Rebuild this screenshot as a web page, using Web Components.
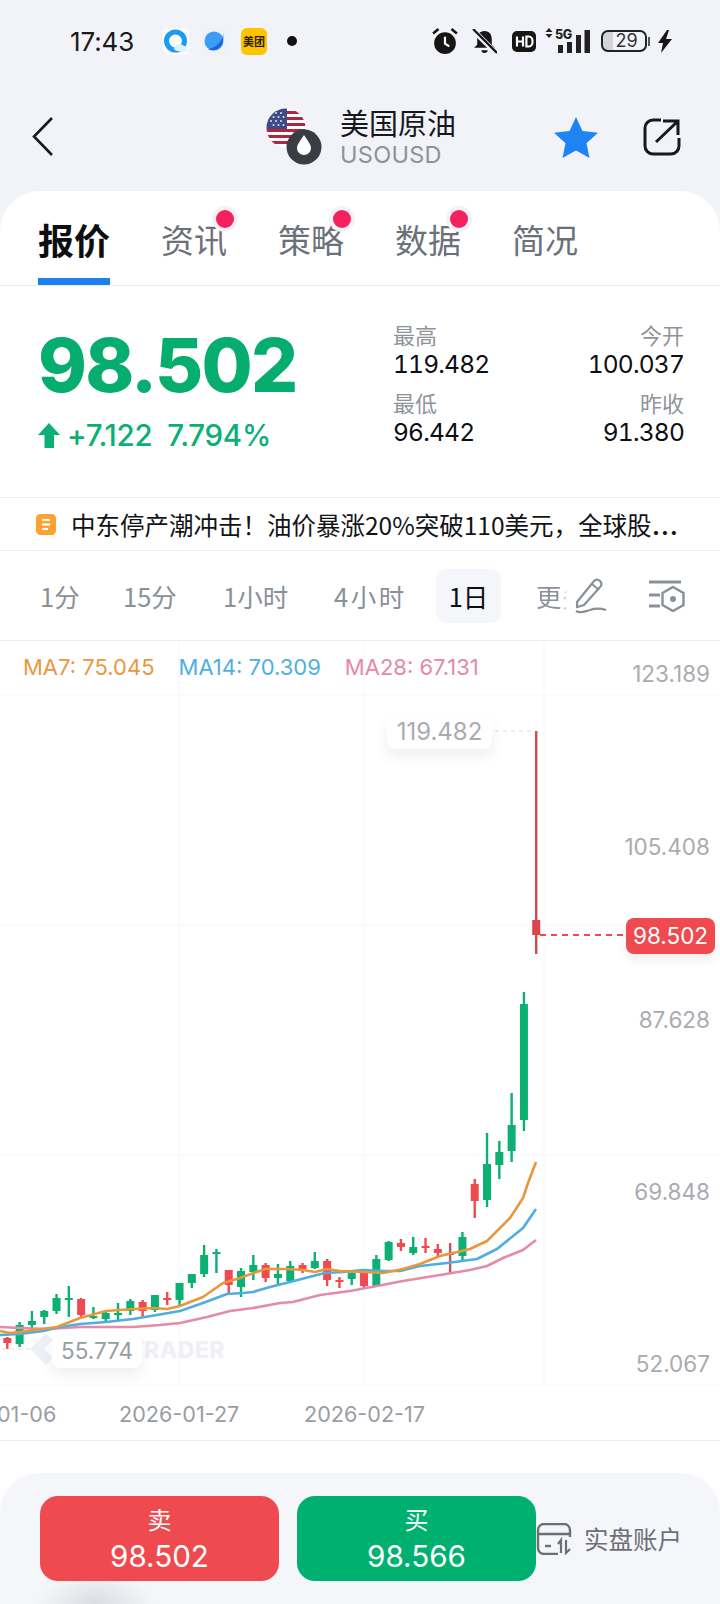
<!DOCTYPE html>
<html lang="zh">
<head>
<meta charset="utf-8">
<title>USOUSD</title>
<style>
    html, body { margin: 0; padding: 0; background: #f2f3f8; }
    body { width: 720px; height: 1604px; overflow: hidden; font-family: Inter, "Noto Sans CJK SC", sans-serif; }
    #page-card { display: block; background: #ffffff; border-radius: 40px 40px 0 0; }
</style>
</head>
<body>
<status-bar></status-bar>
<app-header></app-header>
<div id="page-card">
    <tab-bar></tab-bar>
    <quote-panel></quote-panel>
    <news-ticker></news-ticker>
    <period-bar></period-bar>
    <kline-chart></kline-chart>
    <trade-bar></trade-bar>
</div>
<script>
const FONT = `Inter, "Noto Sans CJK SC", sans-serif`;
const CJK = `"Noto Sans CJK SC", sans-serif`;

// every component is only a template, so one small base class is enough
function define(name, html, onReady) {
    const $template = document.createElement("template");
    $template.innerHTML = html;
    customElements.define(name, class extends HTMLElement {
        constructor() {
            super();
            this.attachShadow({ mode: "open" });
            this.shadowRoot.appendChild($template.content.cloneNode(true));
            if (onReady) onReady(this.shadowRoot);
        }
    });
}

define("status-bar", /*html*/ `
    <style>
        :host { display: flex; align-items: center; height: 82px; padding-left: 70px; box-sizing: border-box; font-family: ${FONT}; color: #1a1a1a; }
        .time { font-size: 26px; width: 93px; letter-spacing: -0.1px; }
        svg { display: block; flex: none; }
        .tile { width: 26px; height: 27px; margin-right: 13px; }
        .mt { width: 26px; height: 27px; border-radius: 6px; background: #ffc300; display: flex; align-items: center; justify-content: center; font: 700 11px ${CJK}; color: #2a2000; margin-right: 20px; flex: none; }
        .dot { width: 10px; height: 10px; border-radius: 50%; background: #111; flex: none; }
        .right { margin-left: auto; margin-right: 48px; display: flex; align-items: center; }
        .batt { position: relative; width: 46px; height: 22px; box-sizing: border-box; border: 2px solid #222; border-radius: 7px; font-size: 18px; line-height: 18px; text-align: center; color: #333; margin-left: 10px; background: linear-gradient(90deg, #d4d5d8 0 24%, transparent 24%); padding-left: 5px; }
        .tip { width: 2px; height: 9px; background: #555; margin: 0 8px 0 1px; }
    </style>
    <span class="time">17:43</span>
    <svg class="tile" viewBox="0 0 26 27"><rect width="26" height="27" rx="6" fill="#fbfcfe"/><circle cx="12.5" cy="13" r="9" fill="none" stroke="#1d9bf0" stroke-width="5"/><path d="M11 21c0-4 7-6 10-3 3 0 4 2 3 5-1 1-11 1-13-2z" fill="#e3f1fb"/></svg>
    <svg class="tile" viewBox="0 0 26 27"><rect width="26" height="27" rx="6" fill="#eef1f6"/><circle cx="12" cy="13" r="9.5" fill="#3d9df5"/><path d="M21 5c1 6-6 15-15 16 3 2 9 2 12-2 3-3 4-9 3-14z" fill="#1e62dc"/></svg>
    <span class="mt">美团</span>
    <span class="dot"></span>
    <div class="right">
        <svg width="26" height="26" viewBox="0 0 24 24" style="margin-right:14px"><circle cx="12" cy="14" r="10" fill="#161616"/><path d="M12 8v6.5l4 2.5" stroke="#fff" stroke-width="2" fill="none"/><path d="M1 5l5-4M23 5l-5-4" stroke="#161616" stroke-width="2.4"/></svg>
        <svg width="25" height="25" viewBox="0 0 24 24" style="margin-right:15px"><path d="M12 2c5 0 7 4 7 8v5l3 3H2l3-3v-5c0-4 2-8 7-8z" fill="#161616"/><path d="M9 20.5h6a3 2.5 0 0 1-6 0z" fill="#161616"/><path d="M1 1l22 22" stroke="#f2f3f8" stroke-width="5"/><path d="M1 0l23 23" stroke="#161616" stroke-width="2.2"/></svg>
        <svg width="24" height="21" viewBox="0 0 24 21" style="margin-right:9px"><rect width="24" height="21" rx="5" fill="#161616"/><path d="M5 5.5v10M11 5.5v10M5 10.5h6" stroke="#fff" stroke-width="2.2" fill="none"/><path d="M14.4 5.5v10h2.4c5 0 5-10 0-10z" stroke="#fff" stroke-width="2.2" fill="none"/></svg>
        <svg width="46" height="26" viewBox="0 0 46 26"><path d="M4 0l3.5 4h-7zM4 10l3.5-4h-7z" fill="#222"/><text x="10" y="10.5" font-family="Inter" font-size="12.5" font-weight="800" fill="#222" letter-spacing="-0.4">5G</text><path d="M13 17h5v8h-5zM22 14h5v11h-5zM31 7h5v18h-5zM39.500 2h5.500v23h-5.500z" fill="#222"/></svg>
        <div class="batt">29</div>
        <div class="tip"></div>
        <svg width="14" height="23" viewBox="0 0 14 23"><path d="M9 0L0 13h5l-2 10 11-14H8l3-9z" fill="#161616"/></svg>
    </div>
`);

define("app-header", /*html*/ `
    <style>
        :host { display: flex; align-items: center; height: 109px; position: relative; font-family: ${CJK}; padding: 0 38px 0 31px; box-sizing: border-box; }
        svg { display: block; flex: none; }
        .mid { display: flex; align-items: center; margin-left: 212px; }
        .name { margin-left: 18px; width: 115px; }
        .cn { font-size: 29px; line-height: 34px; color: #16181c; white-space: nowrap; }
        .code { font: 400 23.500px/28px ${FONT}; color: #8d939b; margin-top: 2px; letter-spacing: 0.3px; }
        .star { margin-left: 99px; }
        .share { margin-left: 45px; }
    </style>
    <svg width="23" height="41" viewBox="0 0 23 41"><path d="M21 2L3 20.500l18 18.500" fill="none" stroke="#17191d" stroke-width="2.6"/></svg>
    <div class="mid">
        <svg width="56" height="58" viewBox="0 0 56 58">
            <defs><clipPath id="c"><circle cx="20" cy="20" r="19.500"/></clipPath></defs>
            <g clip-path="url(#c)">
                <rect width="40" height="40" fill="#fff"/>
                <path d="M0 3h40v3H0zM0 9h40v3H0zM0 15h40v3H0zM0 21h40v3H0zM0 27h40v3H0zM0 33h40v3H0z" fill="#b0263c"/>
                <rect width="21" height="21" fill="#3c4c85"/>
                <g fill="#dfe3f2"><circle cx="5" cy="5" r="1"/><circle cx="10" cy="5" r="1"/><circle cx="15" cy="5" r="1"/><circle cx="7.500" cy="9" r="1"/><circle cx="12.500" cy="9" r="1"/><circle cx="17.500" cy="9" r="1"/><circle cx="5" cy="13" r="1"/><circle cx="10" cy="13" r="1"/><circle cx="15" cy="13" r="1"/><circle cx="7.500" cy="17" r="1"/><circle cx="12.500" cy="17" r="1"/><circle cx="17.500" cy="17" r="1"/></g>
            </g>
            <circle cx="38" cy="39" r="17.500" fill="#3a3d44"/>
            <path d="M38 27c3 5 7 9 7 13a7 7 0 0 1-14 0c0-4 4-8 7-13z" fill="#fff"/>
        </svg>
        <div class="name"><div class="cn">美国原油</div><div class="code">USOUSD</div></div>
    </div>
    <svg class="star" width="44" height="42" viewBox="0 0 44 42"><path d="M22 1l6.500 14 15.500 1.800-11.500 10.500 3 14.700L22 34.500 8.500 42l3-14.700L0 16.800 15.500 15z" fill="#1e84f5"/></svg>
    <svg class="share" width="38" height="38" viewBox="0 0 38 38"><path d="M18 2H10a8 8 0 0 0-8 8v18a8 8 0 0 0 8 8h18a8 8 0 0 0 8-8v-8" fill="none" stroke="#17191d" stroke-width="3"/><path d="M13 24L35 3M20 3h15v14" fill="none" stroke="#17191d" stroke-width="3"/></svg>
`);

define("tab-bar", /*html*/ `
    <style>
        :host { display: flex; gap: 51px; height: 95px; box-sizing: border-box; padding-left: 38px; border-bottom: 1px solid #ebedf2; font-family: ${CJK}; }
        .tab { position: relative; font-size: 33px; line-height: 96px; color: #6b7079; height: 94px; }
        .on { font-size: 36px; font-weight: 700; color: #0c0e12; }
        .on::after { content: ""; position: absolute; left: 0; right: 0; bottom: 0; height: 7px; background: #1e7ff0; }
        .dot { position: absolute; right: -7px; top: 19px; width: 18px; height: 18px; border-radius: 50%; background: #f5215f; box-shadow: 0 0 0 4px #f6f0f7; }
    </style>
    <div class="tab on">报价</div>
    <div class="tab">资讯<i class="dot"></i></div>
    <div class="tab">策略<i class="dot"></i></div>
    <div class="tab">数据<i class="dot"></i></div>
    <div class="tab">简况</div>
`);

define("quote-panel", /*html*/ `
    <style>
        :host { display: flex; justify-content: space-between; height: 212px; box-sizing: border-box; padding: 38px 36px 0 38px; border-bottom: 1px solid #ebedf2; font-family: ${FONT}; }
        .price { font-size: 74px; font-weight: 800; line-height: 80px; color: #05ad6e; margin-top: 1px; letter-spacing: -1.800px; }
        .change { display: flex; align-items: center; color: #0bb074; font-size: 29.500px; line-height: 32px; margin-top: 14px; letter-spacing: -0.3px; }
        .change svg { margin-right: 7px; }
        .change b { font-weight: 500; margin-right: 15px; }
        .stats { width: 291px; display: grid; grid-template-columns: 1fr 1fr; row-gap: 14px; align-content: start; }
        .s { font-size: 24.500px; color: #0c0e12; font-feature-settings: "tnum"; }
        .s span { display: block; font: 400 22px/26px ${CJK}; color: #8f949b; margin: -3px 0 3px; }
        .s b { display: block; font-weight: 400; line-height: 28px; letter-spacing: -0.8px; }
        .r { text-align: right; }
    </style>
    <div>
        <div class="price">98.502</div>
        <div class="change">
            <svg width="22" height="25" viewBox="0 0 22 25"><path d="M11 0l11 12h-6v13H6.500V12H0z" fill="#0bb074"/></svg>
            <b>+7.122</b><b>7.794%</b>
        </div>
    </div>
    <div class="stats">
        <div class="s"><span>最高</span><b>119.482</b></div>
        <div class="s r"><span>今开</span><b>100.037</b></div>
        <div class="s"><span>最低</span><b>96.442</b></div>
        <div class="s r"><span>昨收</span><b>91.380</b></div>
    </div>
`);

define("news-ticker", /*html*/ `
    <style>
        :host { display: flex; align-items: center; height: 53px; box-sizing: border-box; padding-left: 36px; border-bottom: 1px solid #ebedf2; font: 400 24.500px ${CJK}; color: #111317; white-space: nowrap; }
        svg { margin-right: 15px; flex: none; }
        i { font: 400 31px/24px Inter; }
    </style>
    <svg width="20" height="21" viewBox="0 0 20 21"><rect width="20" height="21" rx="4.500" fill="#fca233"/><path d="M6 6h8M6 10.500h8M6 15h6" stroke="#fff" stroke-width="2"/></svg>
    <span>中东停产潮冲击！油价暴涨20%突破110美元，全球股<i>…</i></span>
`);

define("period-bar", /*html*/ `
    <style>
        :host { display: grid; grid-template-columns: 83px 100px 111px 102px 100px 38px 75px auto; align-items: center; height: 89px; box-sizing: border-box; padding-left: 40px; font: 400 25.500px ${CJK}; color: #8a9098; }
        .on { width: 65px; height: 54px; display: flex; align-items: center; justify-content: center; border-radius: 10px; background: #f5f6fa; color: #0c0e12; }
        .more { width: 31px; overflow: hidden; white-space: nowrap; -webkit-mask-image: linear-gradient(90deg, #000 85%, transparent); }
        svg { display: block; }
    </style>
    <span>1分</span><span>15分</span><span>1小时</span><span style="letter-spacing:2.500px">4小时</span>
    <span class="on">1日</span>
    <span class="more">更多</span>
    <svg width="34" height="36" viewBox="0 0 34 36"><path d="M3 24L20 3c2-2 4-2 6 0 2 2 2 3 1 5L10 27l-7 2z" fill="none" stroke="#8a9098" stroke-width="2.200"/><path d="M18 6l7 6" stroke="#8a9098" stroke-width="2"/><path d="M2 33c5 3 9 0 14-1 6-2 10-2 16 0" fill="none" stroke="#8a9098" stroke-width="2.200"/></svg>
    <svg width="36" height="32" viewBox="0 0 36 32"><path d="M0 2h32M0 15h11M0 26h11" stroke="#8a9098" stroke-width="3"/><path d="M24 7l10.500 6v12L24 31l-10.500-6V13z" fill="none" stroke="#8a9098" stroke-width="2.400"/><circle cx="24" cy="19" r="3" fill="#8a9098"/></svg>
`);

// chart rows: [colour, wick top, body top, body bottom, wick bottom]
const UP = "#0bb072", DOWN = "#ef4a4f";
const candles = [
    [DOWN, 1337, 1338, 1343, 1349], [UP, 1322, 1325, 1344, 1347], [UP, 1311, 1321, 1325, 1332],
    [UP, 1310, 1311, 1317, 1324], [UP, 1294, 1298, 1311, 1314], [UP, 1286, 1298, 1300, 1317],
    [DOWN, 1298, 1299, 1315, 1318], [UP, 1307, 1316, 1318, 1319], [UP, 1312, 1313, 1319, 1321],
    [UP, 1303, 1313, 1315, 1320], [UP, 1299, 1301, 1311, 1315], [DOWN, 1300, 1302, 1311, 1317],
    [UP, 1295, 1295, 1310, 1312], [DOWN, 1292, 1298, 1300, 1305], [UP, 1283, 1283, 1300, 1306],
    [UP, 1274, 1274, 1283, 1288], [UP, 1245, 1255, 1274, 1277], [UP, 1249, 1252, 1254, 1273],
    [DOWN, 1270, 1270, 1285, 1294], [UP, 1268, 1271, 1287, 1297], [UP, 1255, 1265, 1272, 1280],
    [DOWN, 1263, 1265, 1278, 1282], [UP, 1264, 1274, 1278, 1285], [UP, 1261, 1266, 1281, 1282],
    [DOWN, 1263, 1265, 1269, 1273], [UP, 1252, 1261, 1268, 1269], [DOWN, 1259, 1261, 1280, 1286],
    [DOWN, 1277, 1280, 1282, 1288], [UP, 1272, 1273, 1279, 1285], [DOWN, 1270, 1273, 1286, 1289],
    [UP, 1255, 1259, 1286, 1287], [UP, 1241, 1242, 1260, 1261], [DOWN, 1239, 1243, 1247, 1251],
    [UP, 1237, 1247, 1253, 1255], [DOWN, 1238, 1246, 1248, 1253], [DOWN, 1244, 1249, 1253, 1256],
    ["#c4555a", 1243, 1253, 1254, 1273], [UP, 1232, 1237, 1256, 1261], [DOWN, 1179, 1184, 1201, 1218],
    [UP, 1133, 1164, 1200, 1207], [UP, 1141, 1152, 1165, 1179], [UP, 1093, 1125, 1151, 1162],
    [UP, 992, 1004, 1120, 1131], ["#d9474d", 731, 920, 935, 954]
];
const lines = [
    ["#e58ba7", "0,1327 20,1328 47,1329 80,1327 133,1327 160,1325 180,1323 207,1317 230,1311 253,1308 280,1303 293,1302 320,1295 350,1291 377,1286 403,1281 440,1275 470,1270 487,1266 503,1258 523,1250 536,1240"],
    ["#4fade0", "0,1335 20,1334 43,1331 60,1327 80,1324 106,1322 133,1319 157,1315 180,1311 203,1303 227,1294 243,1293 253,1292 270,1287 290,1282 313,1276 325,1273 343,1272 363,1270 383,1271 400,1271 420,1266 447,1263 477,1259 497,1249 523,1228 536,1209"],
    ["#e8973c", "0,1331 10,1333 20,1332 57,1327 80,1318 106,1311 133,1309 153,1308 167,1309 180,1306 203,1297 223,1283 240,1278 265,1269 280,1269 287,1269 303,1270 315,1272 327,1269 340,1271 363,1272 383,1273 403,1269 420,1264 440,1256 470,1249 487,1241 510,1218 523,1198 528,1183 536,1162"]
];

define("kline-chart", /*html*/ `
    <style>
        :host { display: block; position: relative; height: 801px; box-sizing: border-box; border-top: 1px solid #ebedf2; border-bottom: 1px solid #ebedf2; overflow: hidden; font-family: ${FONT}; }
        svg { display: block; position: absolute; left: 0; top: -1px; }
        .mas { position: absolute; left: 23px; top: 12px; display: flex; gap: 24px; font-size: 22px; line-height: 28px; white-space: nowrap; }
        .lab { position: absolute; font-size: 22.500px; line-height: 28px; color: #a9abb1; white-space: nowrap; }
        .y { right: 10px; }
        .tip { background: #fff; border-radius: 8px; box-shadow: 0 7px 14px rgba(40,50,80,.08); text-align: center; }
        .last { right: 5px; top: 277px; width: 89px; height: 36px; line-height: 36px; border-radius: 8px; background: #ef4a4f; color: #fff; text-align: center; box-shadow: 0 6px 10px rgba(60,40,40,.08); font-size: 22.500px; }
        .mark { position: absolute; left: 128px; top: 694px; font-size: 23px; font-weight: 800; line-height: 30px; color: #eef0f6; letter-spacing: 0.4px; }
        .x { top: 759px; color: #9a9ca2; font-size: 21.600px; }
    </style>
    <svg id="plot" width="720" height="801" viewBox="0 640 720 801"></svg>
    <div class="mark">TRADER</div>
    <div class="mas"><span style="color:#e8983f">MA7: 75.045</span><span style="color:#4fb0dc">MA14: 70.309</span><span style="color:#e48aa5">MA28: 67.131</span></div>
    <div class="lab y" style="top:19px">123.189</div>
    <div class="lab y" style="top:192px">105.408</div>
    <div class="lab y" style="top:365px">87.628</div>
    <div class="lab y" style="top:537px">69.848</div>
    <div class="lab y" style="top:709px">52.067</div>
    <div class="lab tip" style="left:387px;top:76px;width:105px;height:32px;line-height:30px;font-size:24px">119.482</div>
    <div class="lab tip" style="left:52px;top:695px;width:90px;height:32px;line-height:30px;color:#9a9ca2">55.774</div>
    <div class="lab last">98.502</div>
    <div class="lab x" style="left:-3px">01-06</div>
    <div class="lab x" style="left:119px">2026-01-27</div>
    <div class="lab x" style="left:304px">2026-02-17</div>
`, root => {
    const parts = [];
    for (const x of [179, 364, 544]) parts.push(`<path d="M${x} 640V1385" stroke="#f6f7fa" stroke-width="1"/>`);
    for (const y of [695, 925, 1155, 1385]) parts.push(`<path d="M0 ${y}H720" stroke="#f5f6f9" stroke-width="1"/>`);
    parts.push(`<path d="M30 1349l16-16 7 7-9 9 9 9-7 7z" fill="#eef0f6"/>`);
    parts.push(`<path d="M2 1349H30M495 731H534" stroke="#e6e8f5" stroke-width="1.500" stroke-dasharray="4 4"/>`);
    candles.forEach(([color, wt, bt, bb, wb], i) => {
        const x = 7.33 + 12.3 * i;
        parts.push(`<rect x="${x - 1.2}" y="${wt}" width="2.400" height="${wb - wt}" fill="${color}"/>`);
        parts.push(`<rect x="${x - 4}" y="${bt}" width="8" height="${Math.max(bb - bt, 2)}" fill="${color}"/>`);
    });
    parts.push(`<path d="M540 935H626" stroke="#ef4a4f" stroke-width="2" stroke-dasharray="6 5"/>`);
    for (const [color, pts] of lines) parts.push(`<polyline points="${pts}" fill="none" stroke="${color}" stroke-width="2.600" stroke-linejoin="round"/>`);
    root.getElementById("plot").innerHTML = parts.join("");
});

define("trade-bar", /*html*/ `
    <style>
        :host { display: flex; align-items: flex-start; height: 131px; box-sizing: border-box; margin-top: 32px; padding: 23px 0 0 40px; border-radius: 40px 40px 0 0; font-family: ${FONT};
            background: radial-gradient(ellipse 60px 32px at 95px 131px, #dcdde2, transparent), #f5f6fa; }
        .btn { width: 239px; height: 85px; border-radius: 18px; color: #fff; text-align: center; }
        .sell { background: #ef4a4f; margin-right: 18px; }
        .buy { background: #00b070; }
        .btn span { display: block; font: 400 24px/30px ${CJK}; padding-top: 8px; }
        .btn b { display: block; font-weight: 400; font-size: 29.600px; line-height: 40px; margin-top: 2px; }
        .acct { display: flex; align-items: center; margin-top: 25px; font: 400 24.500px ${CJK}; color: #6b7078; white-space: nowrap; }
        svg { margin-right: 12px; display: block; }
    </style>
    <div class="btn sell"><span>卖</span><b>98.502</b></div>
    <div class="btn buy"><span>买</span><b>98.566</b></div>
    <div class="acct">
        <svg width="36" height="32" viewBox="0 0 36 32"><path d="M34 14V7a6 6 0 0 0-6-6H8a6 6 0 0 0-6 6v18a6 6 0 0 0 6 6h14M2 11h32" fill="none" stroke="#6b7078" stroke-width="2.400"/><path d="M9 23h6" stroke="#6b7078" stroke-width="2.400"/><path d="M25 30V17l-3 4M30 17v13l4-4" fill="none" stroke="#6b7078" stroke-width="2.200"/></svg>
        实盘账户
    </div>
`);
</script>
</body>
</html>
